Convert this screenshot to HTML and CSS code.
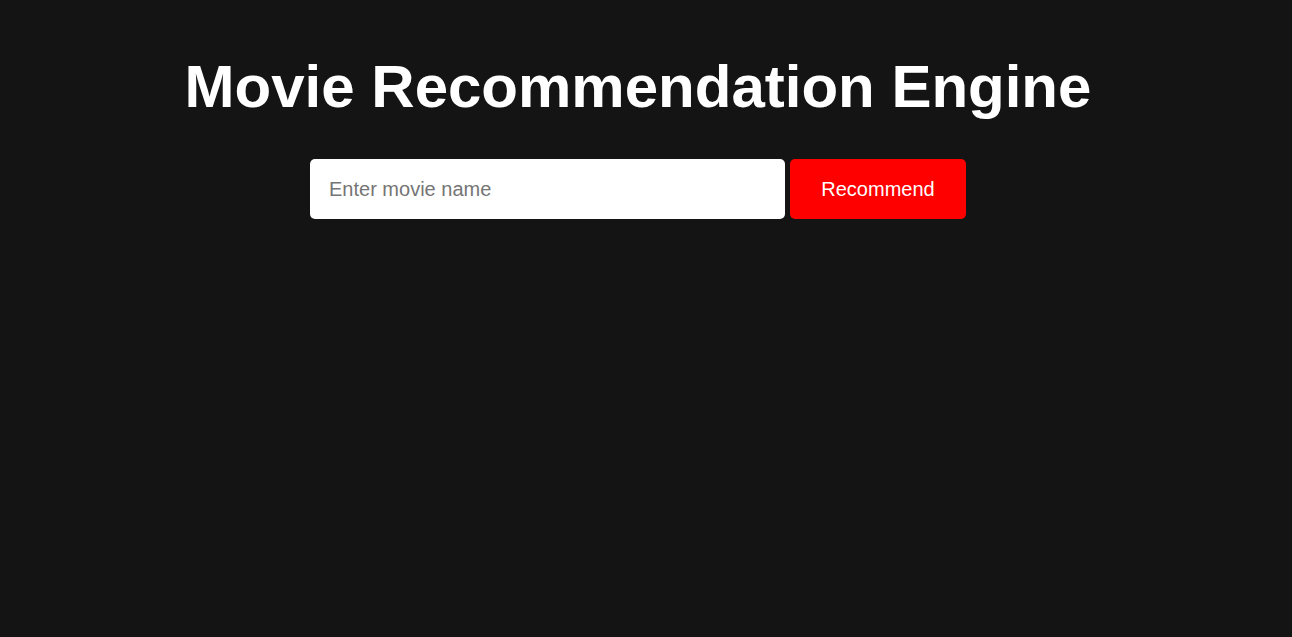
FILE: index.html
```html
<!DOCTYPE html>
<html lang="en">
<head>
<meta charset="utf-8">
<title>Movie Recommendation Engine</title>
<link rel="stylesheet" href="styles.css">
</head>
<body>
<main class="page">
  <h1 class="title">Movie Recommendation Engine</h1>
  <form class="search">
    <input class="search-input" type="text" placeholder="Enter movie name">
    <button class="search-button" type="button">Recommend</button>
  </form>
</main>
</body>
</html>
```

FILE: styles.css
```css
html, body {
  margin: 0;
  padding: 0;
  background: #141414;
  height: 100%;
}
body {
  font-family: "Liberation Sans", Arial, sans-serif;
  color: #ffffff;
}
.page {
  padding: 52px 16px 0 0;
  text-align: center;
}
.title {
  margin: 0 0 38px 0;
  font-size: 60px;
  line-height: 69px;
  font-weight: bold;
  color: #ffffff;
}
.search {
  display: flex;
  justify-content: center;
  gap: 5px;
}
.search-input {
  box-sizing: border-box;
  width: 475px;
  height: 60px;
  padding: 0 19px;
  border: none;
  border-radius: 5px;
  background: #ffffff;
  font-family: "Liberation Sans", Arial, sans-serif;
  font-size: 20px;
  color: #111;
  outline: none;
}
.search-input::placeholder {
  color: #757575;
}
.search-button {
  box-sizing: border-box;
  width: 176px;
  height: 60px;
  border: none;
  border-radius: 5px;
  background: #ff0000;
  color: #ffffff;
  font-family: "Liberation Sans", Arial, sans-serif;
  font-size: 20px;
  cursor: pointer;
}
```
